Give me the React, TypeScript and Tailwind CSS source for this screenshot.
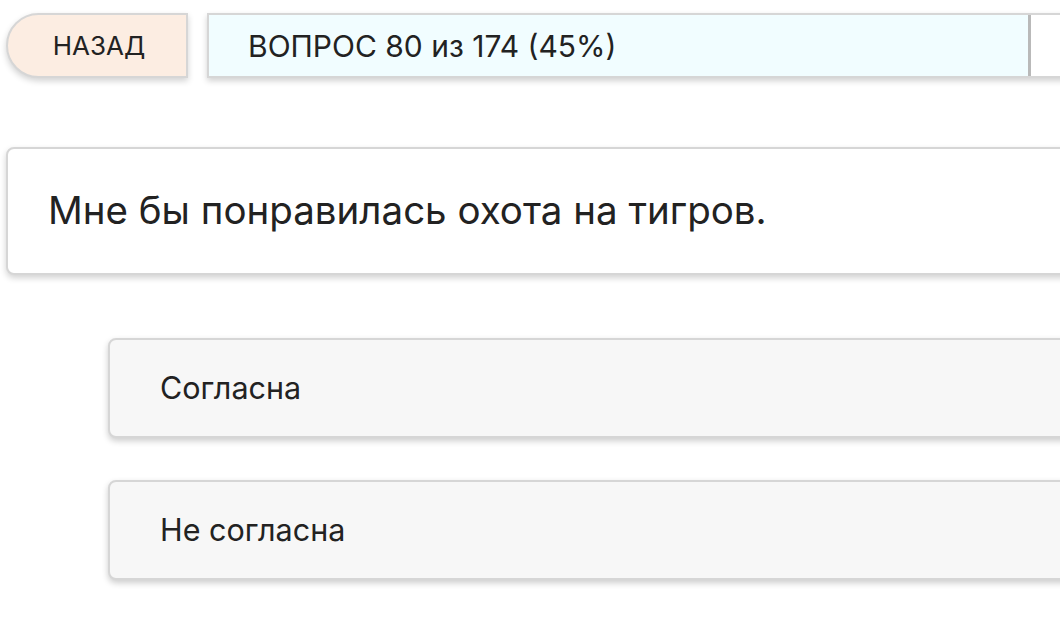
const answers = ['Согласна', 'Не согласна'];

export default function App() {
  return (
    <div
      className="w-[1060px] h-[620px] overflow-hidden bg-white text-[#222]"
      style={{ fontFamily: 'Inter, "Liberation Sans", sans-serif' }}
    >
      <div className="w-[1900px] pl-[6px] pt-[13px]">
        <div className="flex items-stretch gap-[19px] h-[65px]">
          <button className="w-[182px] shrink-0 rounded-l-[33px] border-2 border-[#d6d6d6] bg-[#fcede2] text-[26px] uppercase shadow-[0_3px_6px_rgba(0,0,0,0.18)] pl-[4px]">
            Назад
          </button>
          <div className="flex-1 flex border-2 border-[#d6d6d6] bg-white shadow-[0_3px_6px_rgba(0,0,0,0.18)]">
            <div className="w-[822px] bg-[#f1fdff] border-r-[3px] border-[#b9b9b9] flex items-center pl-[39px] pt-[2px] text-[30px]">
              ВОПРОС 80 из 174 (45%)
            </div>
          </div>
        </div>

        <div className="mt-[69px] h-[128px] rounded-[8px] border-2 border-[#d6d6d6] bg-white shadow-[0_3px_6px_rgba(0,0,0,0.18)] flex items-center pl-[40px] text-[38.5px]">
          Мне бы понравилась охота на тигров.
        </div>

        <div className="mt-[63px] ml-[102px] flex flex-col gap-[42px]">
          {answers.map((a) => (
            <button
              key={a}
              className="h-[100px] rounded-[8px] border-2 border-[#d6d6d6] bg-[#f7f7f7] shadow-[0_3px_6px_rgba(0,0,0,0.2)] flex items-center pl-[50px] text-[30.5px] text-left"
            >
              {a}
            </button>
          ))}
        </div>
      </div>
    </div>
  );
}
